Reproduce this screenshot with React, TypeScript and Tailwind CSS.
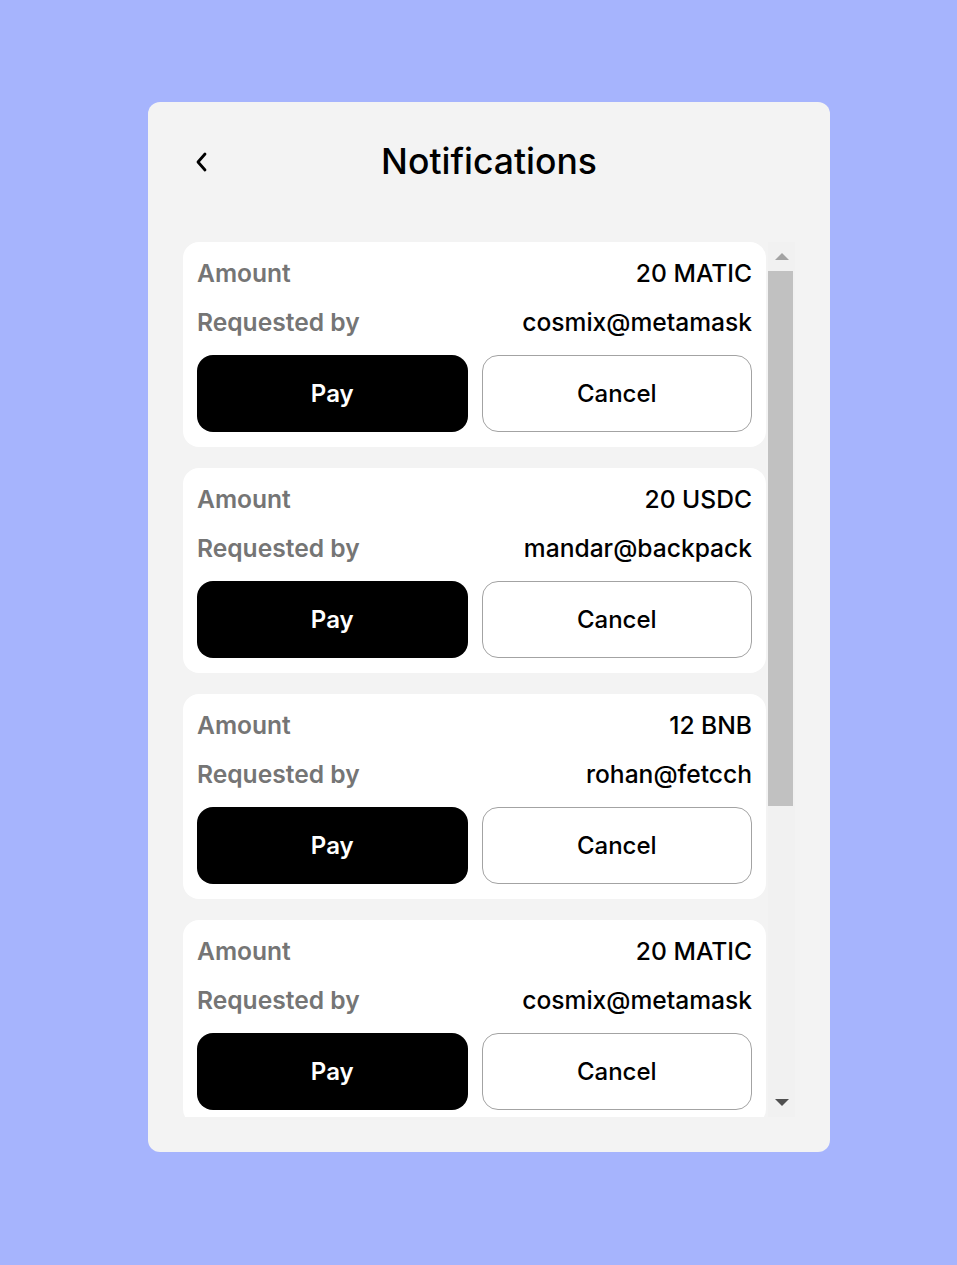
const requests = [
  { amount: "20 MATIC", from: "cosmix@metamask" },
  { amount: "20 USDC", from: "mandar@backpack" },
  { amount: "12 BNB", from: "rohan@fetcch" },
  { amount: "20 MATIC", from: "cosmix@metamask" },
]

function RequestCard({ amount, from }: { amount: string; from: string }) {
  return (
    <div className="shrink-0 rounded-2xl bg-white px-[14px] pt-[15px] pb-[15px]">
      <div className="flex h-[32px] items-center justify-between text-[24.6px]">
        <span className="font-semibold text-[#757575]">Amount</span>
        <span className="font-medium text-black">{amount}</span>
      </div>
      <div className="mt-[17px] flex h-[32px] items-center justify-between text-[24.6px]">
        <span className="font-semibold text-[#757575]">Requested by</span>
        <span className="font-medium text-black">{from}</span>
      </div>
      <div className="mt-[17px] grid grid-cols-2 gap-[14px]">
        <button className="h-[77px] rounded-2xl bg-black text-[24px] font-semibold text-white">Pay</button>
        <button className="h-[77px] rounded-2xl border border-[#a3a3a3] bg-white text-[24px] font-medium text-black">
          Cancel
        </button>
      </div>
    </div>
  )
}

export default function App() {
  return (
    <div className="min-h-screen bg-[#a6b4fd] pt-[102px] font-['Inter',sans-serif]">
      <div className="ml-[148px] flex h-[1050px] w-[682px] flex-col rounded-xl bg-[#f3f3f3] px-[35px] pb-[35px]">
        <div className="relative flex h-[140px] items-center justify-center pb-[20px]">
          <svg
            className="absolute left-[11px] top-[48px]"
            width="16"
            height="24"
            viewBox="0 0 16 24"
            fill="none"
            stroke="black"
            strokeWidth="2.8"
            strokeLinecap="round"
            strokeLinejoin="round"
          >
            <path d="M11 4 L4 12 L11 20" />
          </svg>
          <h1 className="text-[35.5px] font-medium text-black">Notifications</h1>
        </div>
        <div className="flex min-h-0 flex-1">
          <div className="flex w-[583px] flex-col gap-[21px] overflow-hidden">
            {requests.map((r, i) => (
              <RequestCard key={i} amount={r.amount} from={r.from} />
            ))}
          </div>
          <div className="ml-[2px] flex w-[27px] flex-col bg-[#f1f1f1]">
            <div className="flex h-[29px] items-center justify-center">
              <div className="h-0 w-0 border-x-[7px] border-b-[7px] border-x-transparent border-b-[#a3a3a3]" />
            </div>
            <div className="h-[535px] w-[25px] bg-[#c1c1c1]" />
            <div className="flex-1" />
            <div className="flex h-[29px] items-center justify-center">
              <div className="h-0 w-0 border-x-[7px] border-t-[7px] border-x-transparent border-t-[#505050]" />
            </div>
          </div>
        </div>
      </div>
    </div>
  )
}
